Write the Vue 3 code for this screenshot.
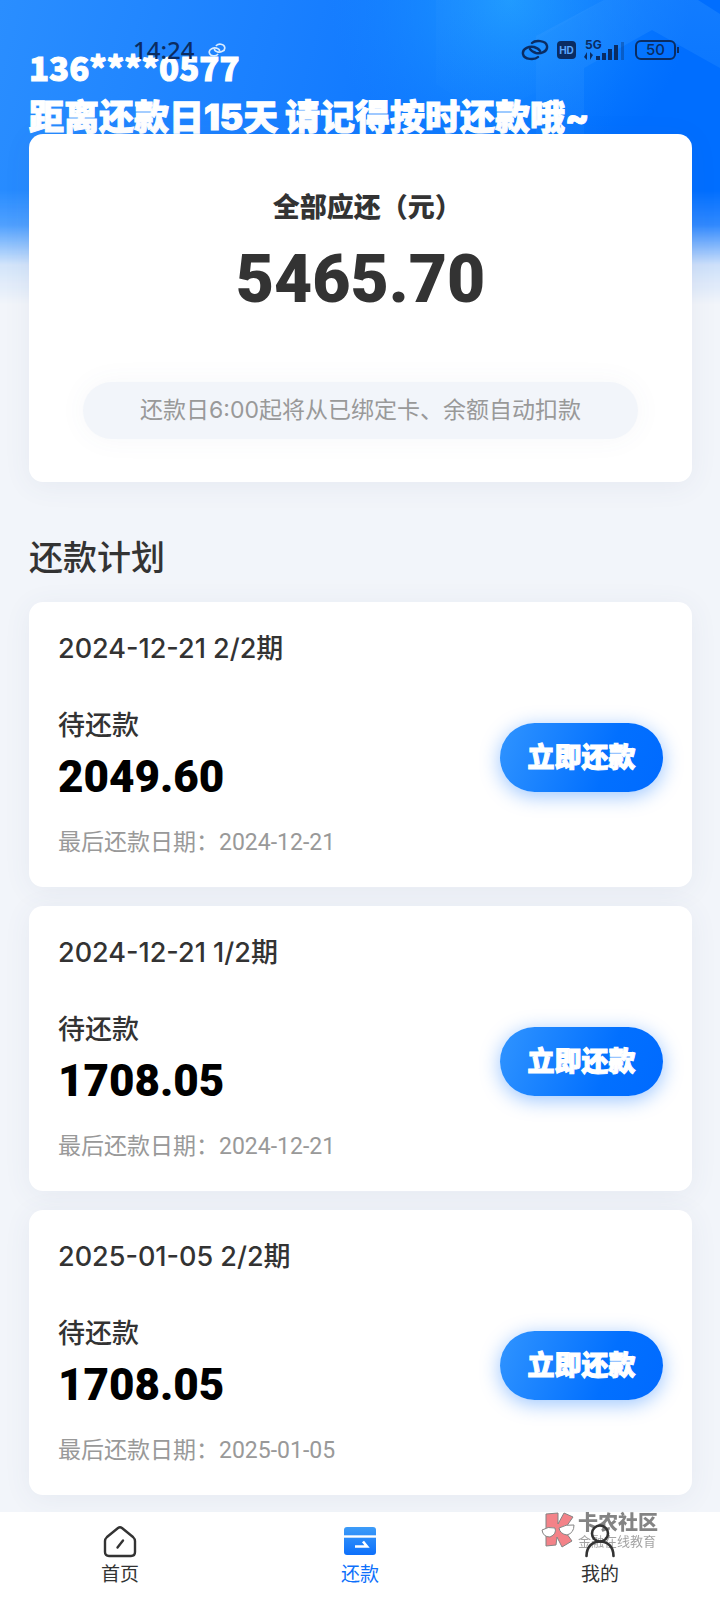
<script setup>
const plans = [
  { id: 1, date: '2024-12-21', term: '2/2期', amount: '2049.60', due: '2024-12-21' },
  { id: 2, date: '2024-12-21', term: '1/2期', amount: '1708.05', due: '2024-12-21' },
  { id: 3, date: '2025-01-05', term: '2/2期', amount: '1708.05', due: '2025-01-05' },
]
</script>

<template>
  <div class="page">
    <div class="backdrop" aria-hidden="true">
      <svg class="hexes" viewBox="0 0 520 300">
        <defs>
          <radialGradient id="glow" gradientUnits="userSpaceOnUse" cx="310" cy="0" r="180">
            <stop offset="0" stop-color="#22a4ff" stop-opacity="0.8" />
            <stop offset="1" stop-color="#1a8cff" stop-opacity="0" />
          </radialGradient>
          <linearGradient id="ring" x1="0" y1="0" x2="0" y2="1">
            <stop offset="0" stop-color="#3b9cff" stop-opacity="0.3" />
            <stop offset="1" stop-color="#3b9cff" stop-opacity="0.05" />
          </linearGradient>
          <linearGradient id="faint" x1="0" y1="0" x2="0" y2="1">
            <stop offset="0" stop-color="#3b9cff" stop-opacity="0.12" />
            <stop offset="1" stop-color="#3b9cff" stop-opacity="0.02" />
          </linearGradient>
        </defs>
        <rect width="520" height="200" fill="url(#glow)" />
        <path d="M236 0V84L290 118L336 92V40L404 0Z" fill="url(#faint)" />
        <path d="M336 36L404 0H498L520 14V68L452 30L384 68V190H336Z" fill="url(#ring)" />
      </svg>
    </div>

    <div class="status">
      <span class="clock">14:24</span>
      <svg class="mini-link" viewBox="0 0 28 22" fill="none" stroke="#d8ebff" stroke-width="2.6" stroke-linecap="round">
        <path d="M13 4C16 1 25 1 26 7C27 13 19 15 15 14C12 13 10 12 10 10" />
        <path d="M15 18C12 21 3 21 2 15C1 9 9 7 13 8C16 9 18 10 18 12" />
      </svg>
      <span class="spacer"></span>
      <svg class="link" viewBox="0 0 28 22" fill="none" stroke="#0a2c62" stroke-width="2.4" stroke-linecap="round">
        <path d="M11 4C14 1 25 1 26 7C27 13 19 15 15 14C12 13 10 12 9 10" />
        <path d="M17 18C14 21 3 21 2 15C1 9 9 7 13 8C16 9 18 10 19 12" />
      </svg>
      <span class="hd">HD</span>
      <svg class="signal" viewBox="0 0 42 28" fill="#0a2c62">
        <text x="1" y="13" font-size="12" font-weight="700" font-family="Inter, sans-serif">5G</text>
        <path d="M3 16v8l-3-3zM6 24v-8l3 3z" />
        <rect x="12" y="20" width="4" height="4" />
        <rect x="18" y="17" width="4" height="7" />
        <rect x="24" y="13" width="4" height="11" />
        <rect x="30" y="9" width="4" height="15" />
        <rect x="37" y="6" width="3" height="18" opacity="0.35" />
      </svg>
      <span class="battery">50</span>
    </div>

    <header class="hero">
      <p>136****0577</p>
      <h1>距离还款日15天 请记得按时还款哦~</h1>
    </header>

    <main>
      <section class="card total">
        <h2>全部应还（元<span>）</span></h2>
        <strong>5465.70</strong>
        <p>还款日6:00起将从已绑定卡、余额自动扣款</p>
      </section>

      <h2 class="heading">还款计划</h2>

      <ul class="plans">
        <li v-for="plan in plans" :key="plan.id" class="card plan">
          <h3>{{ plan.date }} {{ plan.term }}</h3>
          <div class="row">
            <div>
              <p class="state">待还款</p>
              <p class="amount">{{ plan.amount }}</p>
            </div>
            <button type="button">立即还款</button>
          </div>
          <p class="due">最后还款日期：<span>{{ plan.due }}</span></p>
        </li>
      </ul>
    </main>

    <nav class="tabs">
      <div class="mark">
        <svg viewBox="0 0 34 36">
          <path d="M5 2L17 1L17 12L23 1L32 5L23 18L31 29L21 35L16 25L15 33L5 34Z" fill="#f2757c" stroke="#777" />
          <path d="M1 18Q7 14 14 16Q16 22 9 25Q2 25 1 18ZM18 16Q25 12 33 13Q33 21 26 23Q19 22 18 16Z" fill="#fff" stroke="#777" />
        </svg>
        <div>
          <b>卡农社区</b>
          <span>金融在线教育</span>
        </div>
      </div>
      <a href="#home">
        <svg viewBox="0 0 34 34" fill="none" stroke="#333" stroke-width="2.4" stroke-linecap="round" stroke-linejoin="round">
          <path d="M15 4Q17 2.500 19 4L30 13Q32 15 32 17V28Q32 32 28 32H6Q2 32 2 28V17Q2 15 4 13Z" />
          <path d="M14.500 23.500L20 16.500" />
        </svg>
        <span>首页</span>
      </a>
      <a href="#repay" class="active">
        <svg viewBox="0 0 34 34">
          <defs>
            <linearGradient id="wallet" x1="0" y1="0" x2="0" y2="1">
              <stop offset="0" stop-color="#3d9cf8" />
              <stop offset="1" stop-color="#0d70fb" />
            </linearGradient>
          </defs>
          <rect x="1" y="3" width="32" height="28" rx="3" fill="url(#wallet)" />
          <path d="M1 12.500H33" stroke="#fff" stroke-width="2.400" />
          <path d="M12 22.500H24L20 17.500" fill="none" stroke="#fff" stroke-width="2.600" />
        </svg>
        <span>还款</span>
      </a>
      <a href="#mine">
        <svg viewBox="0 0 34 34" fill="none" stroke="#333" stroke-width="2.6" stroke-linecap="round">
          <circle cx="17" cy="9.500" r="8" />
          <path d="M3.500 32C3.500 22 10 17.500 17 17.500S30.500 22 30.500 32" />
        </svg>
        <span>我的</span>
      </a>
    </nav>
  </div>
</template>

<style>
body {
  margin: 0;
  background: #f2f5fa;
}
</style>

<style scoped>
.page {
  position: relative;
  min-height: 100vh;
  display: flex;
  flex-direction: column;
  color: #333;
  font-family: Inter, "Noto Sans CJK SC", sans-serif;
  background: #f2f5fa;
}
p, h1, h2, h3, ul {
  margin: 0;
  padding: 0;
}
.backdrop {
  position: absolute;
  inset: 0 0 auto;
  height: 320px;
  overflow: hidden;
  background: linear-gradient(105deg, #2a8eff, #1a80ff 35%, #006eff 80%);
  mask-image: linear-gradient(#000 190px, rgba(0, 0, 0, 0.8) 225px, rgba(0, 0, 0, 0.15) 265px, transparent 305px);
}
.hexes {
  position: absolute;
  top: 0;
  right: 0;
  width: 520px;
  height: 300px;
}
.status {
  position: absolute;
  z-index: 2;
  top: 34px;
  left: 0;
  right: 0;
  height: 32px;
  padding: 0 44px 0 133px;
  display: flex;
  align-items: center;
  color: #0a2c62;
}
.clock {
  font: 500 24px/32px "Noto Sans", sans-serif;
}
.mini-link {
  width: 18px;
  height: 16px;
  margin-left: 14px;
}
.spacer {
  flex: 1;
}
.link {
  width: 28px;
  height: 22px;
}
.hd {
  margin: 0 8px;
  width: 19px;
  border-radius: 4px;
  background: #0a2c62;
  color: #5aa6ff;
  font: 700 10px/18px Inter, sans-serif;
  text-align: center;
}
.signal {
  width: 42px;
  height: 28px;
  margin-right: 9px;
}
.battery {
  position: relative;
  box-sizing: border-box;
  width: 41px;
  height: 20px;
  border: 2px solid #0a2c62;
  border-radius: 6px;
  font: 500 15px/16px Inter, sans-serif;
  text-align: center;
}
.battery::after {
  content: "";
  position: absolute;
  right: -5px;
  top: 5px;
  width: 2px;
  height: 6px;
  background: #0a2c62;
}
.hero {
  position: relative;
  padding: 45px 29px 0;
  color: #fff;
  -webkit-text-stroke: 1px #fff;
}
.hero p, .hero h1 {
  font-size: 35px;
  line-height: 48px;
  height: 48px;
  font-weight: 900;
  white-space: nowrap;
}
.hero p {
  font-family: "Noto Sans CJK SC", sans-serif;
  font-size: 33px;
  line-height: 44px;
}
.hero h1 {
  height: 41px;
}
main {
  position: relative;
  padding: 0 28px 17px 29px;
}
.card {
  border-radius: 14px;
  background: #fff;
  box-shadow: 0 4px 28px rgba(70, 90, 130, 0.07);
}
.total {
  padding: 56px 54px 43px;
  text-align: center;
}
.total h2 {
  font-size: 27px;
  line-height: 36px;
  font-weight: 900;
}
.total h2 span {
  font-feature-settings: "halt";
}
.total strong {
  display: block;
  margin-top: 16px;
  font: 900 66px/76px Roboto, sans-serif;
}
.total p {
  margin-top: 64px;
  border-radius: 29px;
  background: #f2f5fa;
  box-shadow: 0 0 28px rgba(70, 90, 130, 0.05);
  color: #999;
  font-size: 23px;
  line-height: 57px;
}
.heading {
  margin: 52px 0 20px;
  font-size: 34px;
  line-height: 48px;
  font-weight: 500;
}
.plans {
  display: grid;
  gap: 19px;
  list-style: none;
}
.plan {
  padding: 29px 29px 27px;
}
.plan h3 {
  font-size: 27px;
  line-height: 36px;
  font-weight: 500;
}
.row {
  display: flex;
  justify-content: space-between;
  align-items: center;
  margin: 39px 0 16px;
}
.state {
  font-size: 27px;
  line-height: 39px;
  font-weight: 500;
}
.amount {
  color: #000;
  font: 900 44px/64px Roboto, sans-serif;
}
button {
  width: 163px;
  height: 69px;
  padding: 0;
  border: 0;
  border-radius: 35px;
  background: linear-gradient(110deg, #3094ff, #0270ff 65%, #006aff);
  box-shadow: 0 4px 20px rgba(0, 110, 255, 0.4);
  color: #fff;
  font: 900 27px/36px Inter, "Noto Sans CJK SC", sans-serif;
  -webkit-text-stroke: 1px #fff;
}
.due {
  color: #999;
  font-size: 23px;
  line-height: 34px;
}
.due span {
  font-family: Roboto, sans-serif;
}
.tabs {
  position: relative;
  flex: 1;
  min-height: 86px;
  display: grid;
  grid-template-columns: repeat(3, 1fr);
  background: #fff;
}
.tabs a {
  position: relative;
  display: flex;
  flex-direction: column;
  align-items: center;
  padding-top: 12px;
  color: #333;
  font-size: 19px;
  line-height: 28px;
  text-decoration: none;
}
.tabs a svg {
  width: 34px;
  height: 34px;
  margin-bottom: 3px;
}
.tabs .active {
  color: #0d70fb;
}
.mark {
  position: absolute;
  top: 0;
  right: 62px;
  display: flex;
  gap: 3px;
  opacity: 0.9;
  color: #777;
}
.mark svg {
  width: 34px;
  height: 36px;
}
.mark b, .mark span {
  display: block;
  font-size: 20px;
  line-height: 22px;
  font-weight: 900;
}
.mark span {
  color: #999;
  font-size: 13px;
  line-height: 14px;
  font-weight: 400;
}
</style>
